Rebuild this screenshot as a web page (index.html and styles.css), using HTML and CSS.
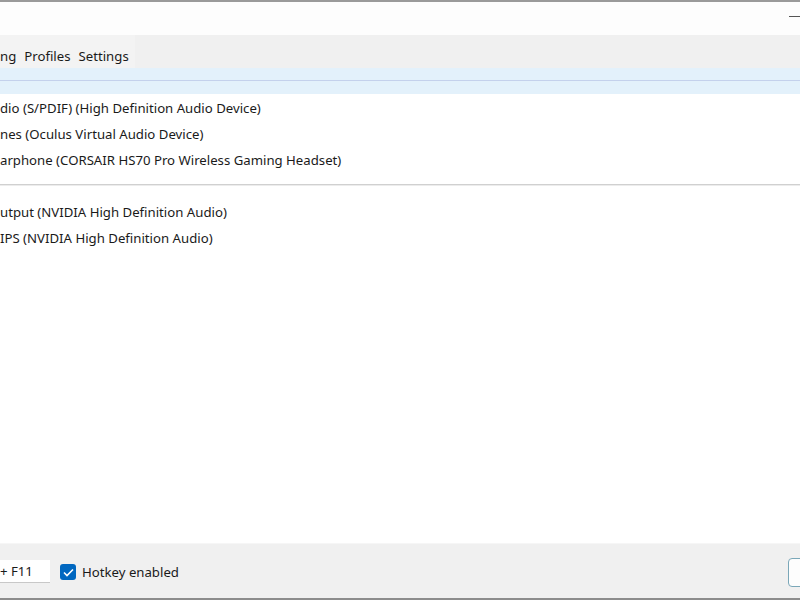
FILE: index.html
```html
<!DOCTYPE html>
<html lang="en">
<head>
  <meta charset="UTF-8">
  <title>Audio Switcher</title>
  <link rel="stylesheet" href="styles.css">
</head>
<body>
<div class="window">
  <!-- Title bar -->
  <div class="titlebar">
    <span class="minimize"></span>
  </div>

  <!-- Menu -->
  <div class="menubar">
    <div class="menu-items">
      <span class="menu-item first">ng</span>
      <span class="menu-item">Profiles</span>
      <span class="menu-item">Settings</span>
    </div>
  </div>

  <!-- Device list -->
  <div class="device-list">
    <div class="list-header"></div>
    <div class="group">
      <div class="device">dio (S/PDIF) (High Definition Audio Device)</div>
      <div class="device">nes (Oculus Virtual Audio Device)</div>
      <div class="device">arphone (CORSAIR HS70 Pro Wireless Gaming Headset)</div>
    </div>
    <div class="separator"></div>
    <div class="group">
      <div class="device">utput (NVIDIA High Definition Audio)</div>
      <div class="device">IPS (NVIDIA High Definition Audio)</div>
    </div>
  </div>

  <!-- Bottom bar -->
  <div class="bottombar">
    <div class="hotkey-box">+ F11</div>
    <label class="check">
      <span class="checkbox">
        <svg width="11" height="9" viewBox="0 0 11 9"><path d="M1 4.5 L4 7.5 L10 1.5" fill="none" stroke="#fff" stroke-width="1.6"/></svg>
      </span>
      Hotkey enabled
    </label>
    <div class="spacer"></div>
    <div class="button"></div>
  </div>
</div>
</body>
</html>
```

FILE: styles.css
```css
body {
  margin: 0;
  padding: 0;
  font-family: "Noto Sans", "Open Sans", sans-serif;
  font-size: 13.2px;
  color: #1a1a1a;
  background: #fff;
}

.window {
  display: flex;
  flex-direction: column;
  width: 800px;
  height: 600px;
  overflow: hidden;
  border-top: 2px solid #9a9a9a;
  border-bottom: 2px solid #8c8c8c;
  box-sizing: border-box;
}

/* Title bar */
.titlebar {
  height: 33px;
  background: #fdfdfd;
  position: relative;
}

.minimize {
  position: absolute;
  right: 0;
  top: 14px;
  width: 11px;
  height: 1px;
  background: #555;
}

/* Menu bar */
.menubar {
  height: 33px;
  background: #f0f0f0;
  display: flex;
}

.menu-items {
  display: flex;
  background: #f3f3f3;
  align-items: center;
  padding: 8px 2px 0 0;
}

.menu-item {
  padding: 0 4px;
  color: #1a1a1a;
}

.menu-item.first {
  padding-left: 0;
}

/* List */
.device-list {
  flex: 1;
  background: #fff;
}

.list-header {
  height: 12px;
  background: #e3f1fb;
  border-bottom: 1px solid #c4d1ec;
  box-shadow: 0 13px 0 0 #e3f1fb;
  margin-bottom: 14px;
}

.device {
  height: 26px;
  line-height: 26px;
  white-space: nowrap;
}

.separator {
  height: 1px;
  background: #d0d0d0;
  border-bottom: 1px solid #ececec;
  margin: 11px 0 13px;
}

/* Bottom bar */
.bottombar {
  height: 55px;
  background: #f0f0f0;
  border-top: 1px solid #f6f6f6;
  display: flex;
  align-items: center;
  padding-top: 2px;
  box-sizing: border-box;
}

.hotkey-box {
  width: 50px;
  height: 23px;
  line-height: 23px;
  background: #fff;
  border-bottom: 1px solid #c8c8c8;
  box-sizing: border-box;
  margin-top: -2px;
}

.check {
  display: flex;
  align-items: center;
  margin-left: 10px;
}

.checkbox {
  width: 16px;
  height: 16px;
  background: #0067c0;
  border-radius: 3px;
  display: flex;
  align-items: center;
  justify-content: center;
  margin-right: 6px;
}

.spacer {
  flex: 1;
}

.button {
  width: 30px;
  height: 29px;
  margin-right: -18px;
  border: 1px solid #7aa7b8;
  border-radius: 4px;
  background: #fdfdfd;
  box-sizing: border-box;
}
```
